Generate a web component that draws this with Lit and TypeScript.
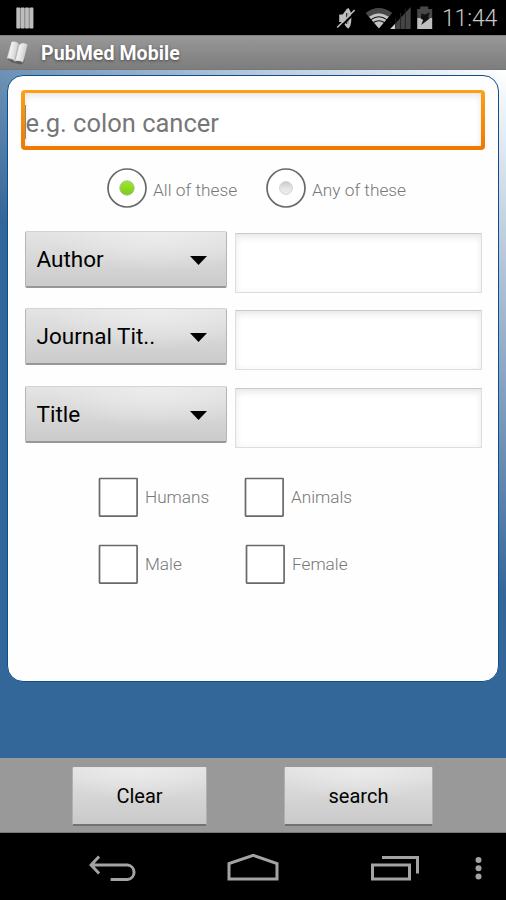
import { LitElement, html, css, svg } from "lit";
import { customElement, property } from "lit/decorators.js";

@customElement("status-bar")
class StatusBar extends LitElement {
  static styles = css`
    :host { display: flex; align-items: center; height: 35px; background: #000; padding: 0 9px 0 16px; }
    .notice { width: 18px; height: 22px; flex: none; }
    .icons { width: 98px; height: 24px; margin-left: auto; flex: none; }
    .clock { width: 55px; margin-left: 9px; font-size: 23px; line-height: 35px; color: #c8c8c8; font-weight: 300; letter-spacing: -0.15px; white-space: nowrap; padding-top: 2px; }
  `;
  render() {
    return html`
      <svg class="notice" viewBox="0 0 18 22">
        <rect x="0.5" y="1" width="17" height="20" fill="#828282"></rect>
        ${[0.5, 4.9, 9.3, 13.7].map((x) => svg`<rect x=${x} y="0.5" width="3.4" height="21" fill="#bdbdbd"></rect>`)}
      </svg>
      <svg class="icons" viewBox="335.300 5 98 24">
        <path d="M339.500 13.500h3.500l4-5.500 2-1v20.500l-2-1-4-5.500h-3.500z" fill="#bebebe"></path>
        <path d="M347.800 8.200c3.400 2.500 3.400 16 0 18.300" fill="none" stroke="#bebebe" stroke-width="2.600"></path>
        <path d="M347 12v11" stroke="#222" stroke-width="1.100"></path>
        <path d="M338.500 28L356.500 10.500" stroke="#000" stroke-width="2"></path>
        <path d="M337.500 26.500L355 9" stroke="#bebebe" stroke-width="1.600"></path>
        <path d="M366 12q13-10 26.500 0l-3.300 4q-10-7-20 0z" fill="#484848"></path>
        <path d="M369.200 15.800q10-7 20 0L379.200 27.500z" fill="#c4c4c4"></path>
        <path d="M371.300 18.600q7.900-5.600 15.800 0M373.800 21.500q5.400-3.600 10.800 0" fill="none" stroke="#111" stroke-width="1.100"></path>
        <path d="M390.500 28L411 6v22z" fill="#454545"></path>
        <path d="M390.500 28l5.200-5.500V28z" fill="#d0d0d0"></path>
        <path d="M396 17v11M400.800 12v16M405.600 8v20" stroke="#222" stroke-width="0.900"></path>
        <path d="M417.500 8h3V5.500h8V8h4v9h-15z" fill="#484848"></path>
        <path d="M417.500 17h15v11h-15z" fill="#bebebe"></path>
        <path d="M422 12.300l2.500 1.500 5.500-2.300-1.500 4.500 1.500 1.500-8.500 6.500 2-5-2.500-1.500z" fill="#111"></path>
      </svg>
      <span class="clock">11:44</span>
    `;
  }
}

@customElement("title-bar")
class TitleBar extends LitElement {
  static styles = css`
    :host { display: flex; align-items: center; height: 35px; padding-left: 6px; background: linear-gradient(#989898, #7d7d7d); box-sizing: border-box; border-top: 1px solid #7f7f7f; border-bottom: 1px solid #777; }
    .logo { width: 23px; height: 25px; flex: none; }
    .name { margin-left: 12px; padding-top: 1px; color: #fff; font-size: 19.500px; font-weight: 700; letter-spacing: 0.080px; text-shadow: 0 1px 3px #444; }
  `;
  render() {
    return html`
      <svg class="logo" viewBox="6 40 23 25">
        <defs>
          <linearGradient id="page" x1="0" x2="1" y1="0" y2="0.3">
            <stop offset="0" stop-color="#b4b4b4"></stop><stop offset="0.45" stop-color="#f0f0f0"></stop><stop offset="1" stop-color="#c8c8c8"></stop>
          </linearGradient>
        </defs>
        <path d="M7 59l5 3.500 9 2 3-2 .5-3-9 1z" fill="#5e5e5e"></path>
        <path d="M11.500 42q4-1.500 7.300 2L15 61.500Q11.500 57.500 6.800 58.500z" fill="url(#page)"></path>
        <path d="M18.500 45.500q4-4.500 9-1L23 62.500q-4-3-8.500-1z" fill="url(#page)"></path>
        <path d="M18.500 45l-3.900 16" stroke="#a8a8a8" stroke-width="0.800"></path>
      </svg>
      <span class="name">PubMed Mobile</span>
    `;
  }
}

@customElement("choice-mark")
class ChoiceMark extends LitElement {
  @property() kind = "check";
  @property() label = "";
  @property({ type: Boolean }) on = false;
  static styles = css`
    :host { display: flex; align-items: center; height: 40px; }
    .mark { width: 40px; height: 40px; flex: none; }
    .label { margin-left: 7px; font-size: 17.200px; line-height: 20px; font-weight: 300; color: #777; white-space: nowrap; }
    .radio { margin-left: 6px; padding-top: 4px; font-size: 17.300px; }
  `;
  render() {
    const radio = this.kind === "radio";
    return html`
      <svg class="mark" viewBox="0 0 40 40">
        <defs>
          <linearGradient id="green" x2="0" y2="1"><stop stop-color="#a0e62d"></stop><stop offset="1" stop-color="#7ccc15"></stop></linearGradient>
          <linearGradient id="gray" x2="0" y2="1"><stop stop-color="#c9c9c9"></stop><stop offset="0.5" stop-color="#e4e4e4"></stop><stop offset="1" stop-color="#ededed"></stop></linearGradient>
        </defs>
        ${radio
          ? svg`<circle cx="20" cy="20" r="19" fill="#fff" stroke="#696969" stroke-width="1.700"></circle>
              <circle cx="20" cy="20" r=${this.on ? 7.2 : 6.5} fill=${this.on ? "url(#green)" : "url(#gray)"} stroke=${this.on ? "#a9b79a" : "#d2d2d2"} stroke-width="0.900"></circle>`
          : svg`<rect x="1.500" y="1.500" width="37.600" height="37.600" rx="0.500" fill="#fff" stroke="#696969" stroke-width="1.700"></rect>`}
      </svg>
      <span class="label ${radio ? "radio" : ""}">${this.label}</span>
    `;
  }
}

@customElement("field-row")
class FieldRow extends LitElement {
  @property() label = "";
  static styles = css`
    :host { display: flex; gap: 8px; height: 62px; }
    .picker { box-sizing: border-box; width: 202px; height: 57px; display: flex; align-items: center; justify-content: space-between; padding: 0 19px 0 10.500px; border: 1px solid #b5b5b5; border-top-color: #d4d4d4; border-bottom: 2px solid #979797; border-radius: 2px; background: radial-gradient(ellipse 110px 40px at 65% 0, #ececec, #ececec00), linear-gradient(#e4e4e4, #cbcbcb); font-size: 22.500px; color: #000; }
    .arrow { width: 17px; height: 9px; margin-top: 3px; }
    .entry { box-sizing: border-box; width: 247px; height: 60px; margin-top: 2px; border: 1px solid #dedede; border-top: 1px solid #cacaca; background: #fff; box-shadow: inset 0 5px 8px -3px #e4e4e4, inset 0 0 7px #f4f4f4; }
  `;
  render() {
    return html`
      <div class="picker"><span>${this.label}</span>
        <svg class="arrow" viewBox="0 0 17 9"><path d="M0 0h17L8.500 9z"></path></svg>
      </div>
      <div class="entry"></div>
    `;
  }
}

@customElement("nav-bar")
class NavBar extends LitElement {
  static styles = css`
    :host { display: block; height: 67px; background: #000; }
    .keys { display: block; width: 506px; height: 67px; }
  `;
  render() {
    return html`
      <svg class="keys" viewBox="0 833 506 67" fill="none" stroke="#a3a3a3" stroke-width="3">
        <path d="M91 865H127a7.300 7.300 0 0 1 0 14.500H110M98.500 856.500l-8 8.500 8 8.500" transform="translate(0.600 0)"></path>
        <path d="M229 879V863.500L253.200 855.300 277 863.500V879z"></path>
        <path d="M372.500 865H409.500V879H372.500zM382 857.500H417.500V873.500"></path>
        <g fill="#a3a3a3" stroke="none"><circle cx="478.500" cy="860" r="3"></circle><circle cx="478.500" cy="868.300" r="3"></circle><circle cx="478.500" cy="876.600" r="3"></circle></g>
      </svg>
    `;
  }
}

@customElement("app-root")
class AppRoot extends LitElement {
  static styles = css`
    :host { display: flex; flex-direction: column; width: 506px; height: 900px; overflow: hidden; font-family: Roboto, "Liberation Sans", sans-serif; }
    .stage { box-sizing: border-box; height: 688px; padding: 5px 7px 0; background: linear-gradient(216.87deg, #fff 0, #336699 424px); }
    .card { box-sizing: border-box; width: 492px; height: 607px; border: 1px solid #0c4f8c; border-radius: 16px; background: #fefefe; padding: 14px 0 0 13px; }
    .query { box-sizing: border-box; width: 464px; height: 60px; padding: 3px 4px 4px; border-radius: 4px; background: linear-gradient(#ff9f17, #f07800); }
    .well { display: flex; align-items: center; height: 53px; background: #fff; box-shadow: inset 0 5px 8px -3px #e4e4e4, inset 0 0 7px #f1f1f1; font-size: 25.500px; color: #777; white-space: nowrap; }
    .caret { width: 1px; height: 34px; margin-top: 4px; background: #888; }
    .hint { padding-top: 7px; margin-left: -0.500px; }
    .radios { display: flex; margin: 18px 0 0 86px; }
    .radios choice-mark { width: 159px; }
    .fields { display: flex; flex-direction: column; gap: 15.300px; margin: 23px 0 0 4px; }
    .checks { display: grid; grid-template-columns: 146px 150px; row-gap: 27.500px; margin: 29px 0 0 77px; }
    .shift { margin-left: 1px; }
    .actions { box-sizing: border-box; height: 75px; display: flex; padding: 9px 0 0 72px; gap: 77px; background: #999; border-bottom: 1px solid #777; }
    .button { box-sizing: border-box; width: 135px; height: 59px; border: 1px solid #b0b0b0; border-top-color: #e4e4e4; border-bottom: 2px solid #727272; border-radius: 2px; background: radial-gradient(ellipse 90px 32px at 50% 0, #ebebeb, #ebebeb00), linear-gradient(#e2e2e2, #c9c9c9); font-size: 20px; line-height: 57px; text-align: center; color: #000; }
    .wide { width: 149px; }
  `;
  render() {
    return html`
      <status-bar></status-bar>
      <title-bar></title-bar>
      <main class="stage">
        <section class="card">
          <div class="query"><div class="well"><span class="caret"></span><span class="hint">e.g. colon cancer</span></div></div>
          <div class="radios">
            <choice-mark kind="radio" label="All of these" on></choice-mark>
            <choice-mark kind="radio" label="Any of these"></choice-mark>
          </div>
          <div class="fields">
            ${["Author", "Journal Tit..", "Title"].map((label) => html`<field-row .label=${label}></field-row>`)}
          </div>
          <div class="checks">
            <choice-mark label="Humans"></choice-mark>
            <choice-mark label="Animals"></choice-mark>
            <choice-mark label="Male"></choice-mark>
            <choice-mark class="shift" label="Female"></choice-mark>
          </div>
        </section>
      </main>
      <div class="actions"><div class="button">Clear</div><div class="button wide">search</div></div>
      <nav-bar></nav-bar>
    `;
  }
}
